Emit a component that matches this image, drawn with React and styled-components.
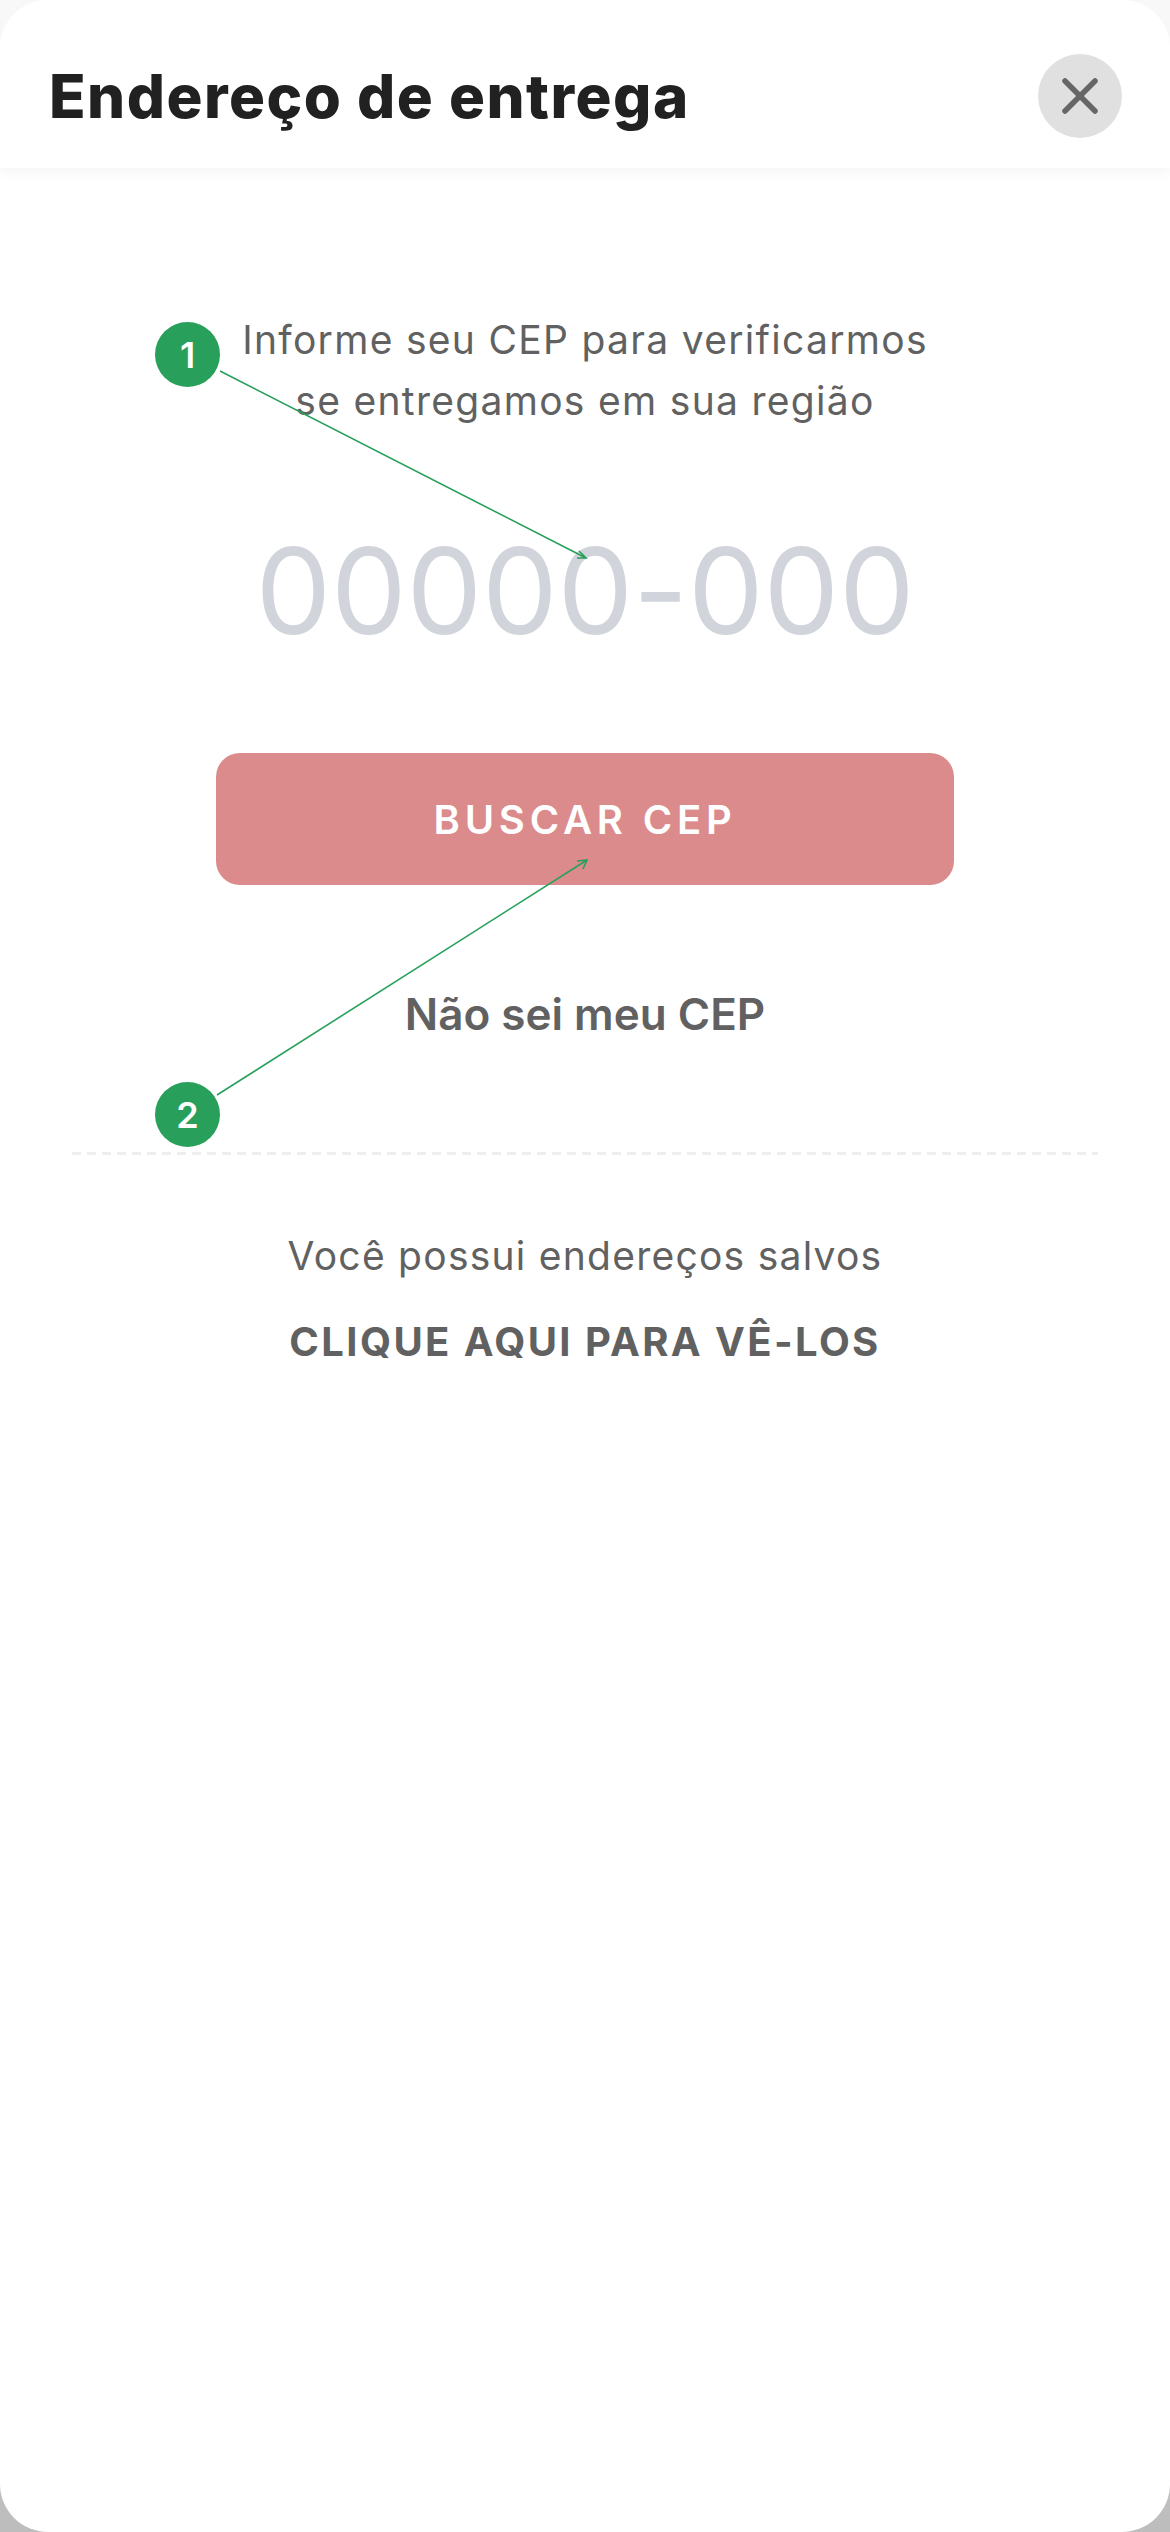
import React from 'react';
import styled, { createGlobalStyle } from 'styled-components';

const GlobalStyle = createGlobalStyle`
  html, body {
    margin: 0;
    padding: 0;
  }

  html {
    background: linear-gradient(#f8f8f8, #f0f0f0 60%, #bdbdbd);
  }

  * {
    box-sizing: border-box;
  }
`;

const Sheet = styled.div`
  position: relative;
  width: 1170px;
  height: 2532px;
  overflow: hidden;
  background: #fff;
  border-radius: 48px;
  font-family: Inter, 'Noto Sans', sans-serif;
  color: #616161;
`;

const Header = styled.header`
  display: flex;
  align-items: center;
  justify-content: space-between;
  height: 168px;
  padding: 23px 48px 0 49px;
  background: #fff;
  box-shadow: 0 3px 12px rgba(0, 0, 0, 0.05);
`;

const Title = styled.h1`
  margin: 0;
  font-size: 60px;
  font-weight: 800;
  letter-spacing: 1.5px;
  color: #212121;
`;

const CloseButton = styled.button`
  display: flex;
  align-items: center;
  justify-content: center;
  width: 84px;
  height: 84px;
  padding: 0;
  border: 0;
  border-radius: 50%;
  background: #e0e0e0;
`;

const Content = styled.main`
  display: flex;
  flex-direction: column;
  align-items: center;
  padding-top: 141px;
`;

const Intro = styled.p`
  margin: 0;
  font-size: 39px;
  line-height: 61px;
  letter-spacing: 1.3px;
  text-align: center;
`;

const CepPlaceholder = styled.div`
  margin-top: 87px;
  font-size: 120px;
  line-height: 146px;
  letter-spacing: -0.2px;
  color: #d1d5db;
`;

const SearchButton = styled.button`
  width: 738px;
  height: 132px;
  margin-top: 89px;
  border: 0;
  border-radius: 24px;
  background: #db8b8b;
  color: #fff;
  font-family: inherit;
  font-size: 40px;
  font-weight: 600;
  letter-spacing: 4.8px;
`;

const UnknownCep = styled.div`
  margin-top: 103px;
  font-size: 44px;
  line-height: 52px;
  font-weight: 600;
`;

const Divider = styled.div`
  width: 1026px;
  height: 3px;
  margin-top: 112px;
  background: repeating-linear-gradient(90deg, #eeeeee 0 9px, transparent 9px 15px);
`;

const SavedText = styled.p`
  margin: 76px 0 0;
  font-size: 39px;
  line-height: 50px;
  letter-spacing: 1.25px;
`;

const SavedLink = styled.div`
  margin-top: 36px;
  font-size: 40px;
  line-height: 50px;
  font-weight: 700;
  letter-spacing: 2.4px;
`;

const Badge = styled.span`
  position: absolute;
  left: 155px;
  top: ${({ $top }) => $top}px;
  display: flex;
  align-items: center;
  justify-content: center;
  width: 65px;
  height: 65px;
  border-radius: 50%;
  background: #28a05c;
  color: #fff;
  font-size: 36px;
  font-weight: 600;
`;

const Arrows = styled.svg`
  position: absolute;
  inset: 0;
  pointer-events: none;
`;

const App = () => (
  <>
    <GlobalStyle />
    <Sheet>
      <Header>
        <Title>Endereço de entrega</Title>
        <CloseButton aria-label="Fechar">
          <svg width="36" height="36" viewBox="0 0 36 36" fill="none" stroke="#666" strokeWidth="5.5" strokeLinecap="round">
            <path d="M3 3 L33 33 M33 3 L3 33" />
          </svg>
        </CloseButton>
      </Header>
      <Content>
        <Intro>
          Informe seu CEP para verificarmos
          <br />
          se entregamos em sua região
        </Intro>
        <CepPlaceholder>00000-000</CepPlaceholder>
        <SearchButton>BUSCAR CEP</SearchButton>
        <UnknownCep>Não sei meu CEP</UnknownCep>
        <Divider />
        <SavedText>Você possui endereços salvos</SavedText>
        <SavedLink>CLIQUE AQUI PARA VÊ-LOS</SavedLink>
      </Content>
      <Arrows width="1170" height="2532" fill="none" stroke="#28a05c" strokeWidth="1.6">
        <path d="M220 371 L586 558 M579 551 L586 558 L577 558" />
        <path d="M217 1095 L587 860 M577 861 L587 860 L583 869" />
      </Arrows>
      <Badge $top={322}>1</Badge>
      <Badge $top={1082}>2</Badge>
    </Sheet>
  </>
);

export default App;
